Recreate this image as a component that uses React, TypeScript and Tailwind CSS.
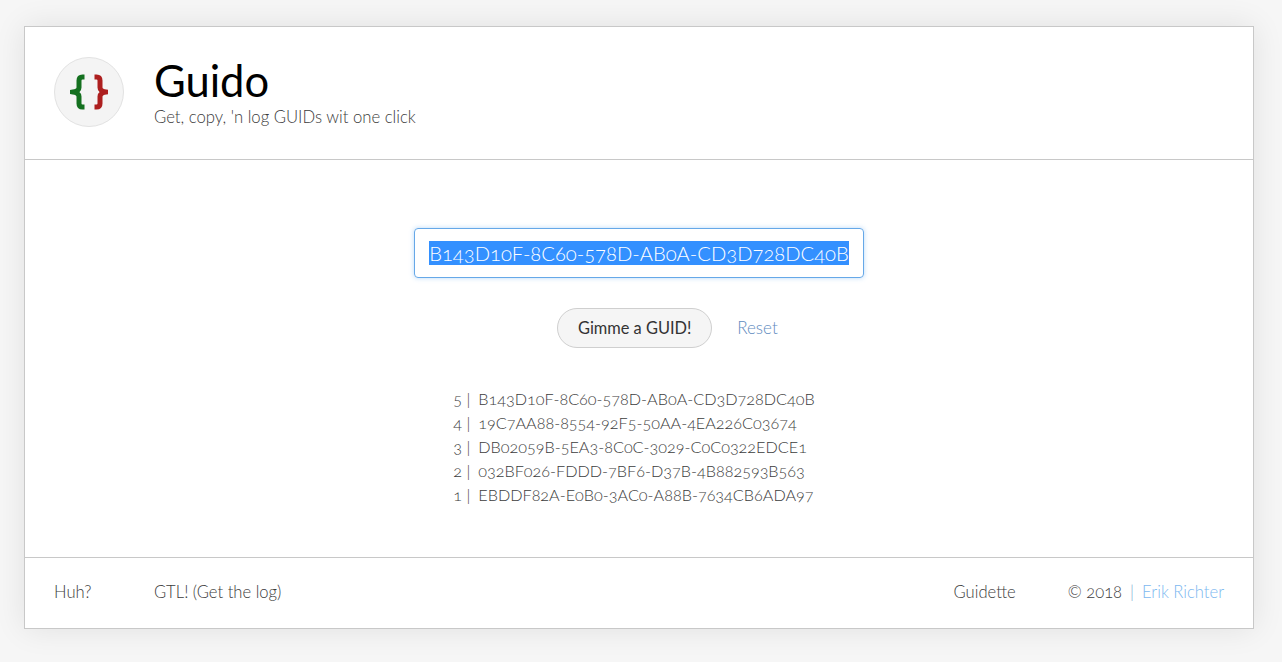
export default function App() {
  const rows = [
    ["5", "B143D10F-8C60-578D-AB0A-CD3D728DC40B"],
    ["4", "19C7AA88-8554-92F5-50AA-4EA226C03674"],
    ["3", "DB02059B-5EA3-8C0C-3029-C0C0322EDCE1"],
    ["2", "032BF026-FDDD-7BF6-D37B-4B882593B563"],
    ["1", "EBDDF82A-E0B0-3AC0-A88B-7634CB6ADA97"],
  ];
  return (
    <div className="h-[662px] overflow-hidden bg-[#f6f6f6] pt-[26px] pr-[28px] pl-[24px] font-['Lato',sans-serif] font-light text-[#3c3c3c] oldstyle-nums">
      <div className="flex h-[603px] flex-col border border-[#c8c8c8] bg-white shadow-[0_0_30px_rgba(0,0,0,0.09)]">
        <header className="flex h-[133px] items-center gap-[30px] border-b border-[#c8c8c8] px-[29px] pb-[2px]">
          <div className="flex h-[70px] w-[70px] items-center justify-center rounded-full border border-[#e2e2e2] bg-[#f4f4f4]">
            <svg width="38" height="38" viewBox="0 0 38 38" fill="none" strokeWidth="5" strokeMiterlimit="10">
              <path d="M14.5 4h-2q-3.5 0-3.5 3.5v7q0 3.5-6 4.5 6 1 6 4.5v7q0 3.5 3.5 3.5h2" stroke="#14701f" />
              <path d="M24.5 4h2q3.5 0 3.5 3.5v7q0 3.5 6 4.5-6 1-6 4.5v7q0 3.5-3.5 3.5h-2" stroke="#ad1f1f" />
            </svg>
          </div>
          <div>
            <h1 className="text-[43.5px] leading-[46px] font-normal text-black">Guido</h1>
            <p className="mt-[3px] text-[16.7px] leading-[22px]">Get, copy, 'n log GUIDs wit one click</p>
          </div>
        </header>
        <main className="flex flex-1 flex-col items-center">
          <div className="mt-[68px] flex h-[50px] w-[450px] items-center justify-center rounded-[4px] border border-[#66a8e8] text-[20.2px] whitespace-nowrap shadow-[0_0_5px_rgba(80,160,240,0.4)]">
            <span className="bg-[#3390ff] leading-[24px] text-white">B143D10F-8C60-578D-AB0A-CD3D728DC40B</span>
          </div>
          <div className="mt-[30px] ml-[57px] flex items-center gap-[25px]">
            <button className="h-10 w-[155px] rounded-full border border-[#cfcfcf] bg-[#f5f5f5] text-[16.4px] font-normal text-[#333]">Gimme a GUID!</button>
            <a className="text-[17px] text-[#5f8bc0]">Reset</a>
          </div>
          <div className="mt-[39px] -ml-[10px] text-[16.2px] leading-6">
            {rows.map(([n, g]) => (
              <div key={n} className="flex gap-[8px]">
                <span>{n} |</span>
                <span>{g}</span>
              </div>
            ))}
          </div>
        </main>
        <footer className="flex h-[71px] items-center border-t border-[#c8c8c8] px-[29px] pb-[2px] text-[16.6px]">
          <span className="w-[100px]">Huh?</span>
          <span>GTL! (Get the log)</span>
          <span className="ml-auto">Guidette</span>
          <span className="ml-[52px] flex items-center gap-[8px]">
            <span>© 2018</span>
            <span className="text-[#7fa9d0]">|</span>
            <span className="text-[#7db8f0]">Erik Richter</span>
          </span>
        </footer>
      </div>
    </div>
  );
}
